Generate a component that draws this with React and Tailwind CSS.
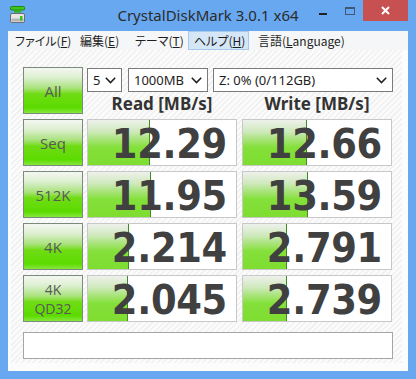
import React from "react";

const Chevron = () => (
  <svg width="11" height="7" viewBox="0 0 11 7" className="block">
    <path d="M0.8 0.8 L5.5 5.6 L10.2 0.8" fill="none" stroke="#1e1e1e" strokeWidth="1.5" />
  </svg>
);

function GButton({ children }) {
  return (
    <div className="w-[60px] h-[47px] shrink-0 border border-[#7c8a7c] bg-[linear-gradient(to_bottom,#f4f7f2_0%,#dcefd0_22%,#a9e27a_45%,#6fdc14_58%,#5cdb00_88%,#86e83e_100%)] flex flex-col items-center justify-center text-[#585858] text-[15px] leading-[16px] font-['Open_Sans',sans-serif]">
      {children}
    </div>
  );
}

function Result({ value, bar }) {
  return (
    <div className="relative w-[150px] h-[47px] shrink-0 border border-[#c8c8c8] bg-white">
      <div
        className="absolute left-0 top-0 bottom-0 border-r border-[#3f8a22] bg-[linear-gradient(to_bottom,#eef1ec_0%,#cfe9bd_25%,#9be262_50%,#84e03a_60%,#7fdd30_100%)]"
        style={{ width: bar }}
      />
      <div className="relative h-full flex items-center justify-end pr-[9px] pt-[3px] text-[41px] leading-[44px] font-bold tracking-[-0.3px] text-[#404040] font-['DejaVu_Sans_Condensed','DejaVu_Sans',sans-serif] [font-stretch:condensed] whitespace-nowrap">
        {value}
      </div>
    </div>
  );
}

function Row({ label, r, rb, w, wb }) {
  return (
    <div className="flex mt-[5px]">
      <GButton>{label}</GButton>
      <div className="ml-[4px]">
        <Result value={r} bar={rb} />
      </div>
      <div className="ml-[5px]">
        <Result value={w} bar={wb} />
      </div>
    </div>
  );
}

function Select({ w, text }) {
  return (
    <div className={`h-[24px] border border-[#7a7a7a] bg-white flex items-center justify-between pl-[5px] pr-[5px] text-[13px] text-[#1e1e1e] font-['Noto_Sans',sans-serif] ${w}`}>
      <span className="leading-none">{text}</span>
      <Chevron />
    </div>
  );
}

export default function App() {
  return (
    <div className="w-[416px] h-[379px] bg-[#68a8f0] flex flex-col px-[8px] pb-[8px] overflow-hidden">
      {/* Title bar */}
      <div className="h-[31px] grid grid-cols-[1fr_auto_1fr] shrink-0">
        <div className="flex items-start">
          <svg width="15" height="17" viewBox="0 0 15 17" className="ml-[2px] mt-[6px]">
            <rect x="0.5" y="0.5" width="14" height="3.5" rx="1" fill="#3fc51f" stroke="#1f8a10" strokeWidth="1" />
            <rect x="4" y="4" width="7" height="2.5" fill="#2fae18" />
            <rect x="0.5" y="7.5" width="14" height="9" rx="1.5" fill="#e6e6e6" stroke="#6d6d6d" strokeWidth="1" />
            <rect x="1.5" y="12.5" width="12" height="3" fill="#b5b5b5" />
            <rect x="10" y="10" width="2.5" height="4.5" fill="#35c21a" />
          </svg>
        </div>
        <div className="pt-[5px] text-[15px] leading-[20px] text-[#2b2b2b] font-['Noto_Sans',sans-serif] whitespace-nowrap">
          CrystalDiskMark 3.0.1 x64
        </div>
        <div className="flex items-start justify-end">
          <div className="w-[8px] h-[2px] mt-[13px] bg-[#222]" />
          <div className="ml-[18px] mt-[7px] w-[10px] h-[8px] border border-[#3f5876] border-t-2" />
          <div className="ml-[8px] w-[45px] h-[21px] bg-[#c75050] flex items-center justify-center">
            <svg width="9" height="9" viewBox="0 0 9 9">
              <path d="M1 1 L8 8 M8 1 L1 8" stroke="#fff" strokeWidth="2" />
            </svg>
          </div>
        </div>
      </div>

      {/* Menu bar */}
      <div className="h-[19px] bg-[#f5f6f7] flex items-stretch shrink-0 text-[12px] text-[#1e1e1e] font-['Noto_Sans_CJK_JP',sans-serif] [font-feature-settings:'palt'] leading-none">
        <div className="ml-[1px] w-[65px] pl-[6px] flex items-center">
          ファイル(<span className="underline">F</span>)
        </div>
        <div className="w-[55px] pl-[6px] flex items-center">
          編集(<span className="underline">E</span>)
        </div>
        <div className="w-[59px] pl-[6px] flex items-center">
          テーマ(<span className="underline">T</span>)
        </div>
        <div className="w-[61px] pl-[5px] flex items-center bg-[#d5e6f7] border border-[#a9c9ec]">
          ヘルプ(<span className="underline">H</span>)
        </div>
        <div className="ml-[3px] pl-[6px] flex items-center">
          言語(<span className="underline">L</span>anguage)
        </div>
      </div>

      {/* Client */}
      <div className="flex-1 bg-[#fcfcfc] flex flex-col pl-[3px] pr-[6px] pb-[8px]">
        <div className="flex-1 bg-[repeating-linear-gradient(135deg,#f1f1f1_0px,#f1f1f1_1.5px,#fbfbfb_1.5px,#fbfbfb_4px)] pl-[12px] pt-[17px]">
          <div className="flex">
            <GButton>All</GButton>
            <div className="ml-[4px] flex flex-col">
              <div className="flex mt-[1px]">
                <Select w="w-[35px]" text="5" />
                <div className="ml-[6px]">
                  <Select w="w-[80px]" text="1000MB" />
                </div>
                <div className="ml-[5px]">
                  <Select w="w-[180px]" text="Z: 0% (0/112GB)" />
                </div>
              </div>
              <div className="flex h-[22px] items-center text-[17px] font-bold text-[#333] font-['Noto_Sans',sans-serif] leading-none">
                <div className="w-[150px] text-center whitespace-nowrap">Read [MB/s]</div>
                <div className="ml-[5px] w-[150px] text-center whitespace-nowrap">Write [MB/s]</div>
              </div>
            </div>
          </div>
          <Row label="Seq" r="12.29" rb={62} w="12.66" wb={64} />
          <Row label="512K" r="11.95" rb={63} w="13.59" wb={65} />
          <Row label="4K" r="2.214" rb={41} w="2.791" wb={44} />
          <Row
            label={
              <div className="flex flex-col items-center text-[14px] leading-[19px]">
                <span>4K</span>
                <span>QD32</span>
              </div>
            }
            r="2.045"
            rb={40}
            w="2.739"
            wb={44}
          />
          <div className="mt-[10px] w-[370px] h-[27px] border border-[#a5a5a5] bg-white" />
        </div>
      </div>
    </div>
  );
}
